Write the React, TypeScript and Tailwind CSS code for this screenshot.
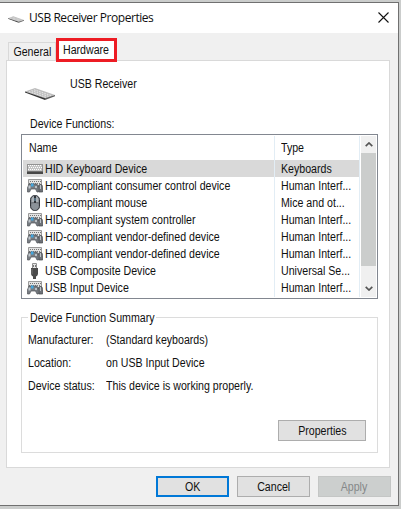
import { useState } from 'react';
import type { ReactNode } from 'react';
import clsx from 'clsx';

type IconKind = 'keyboard' | 'hid' | 'mouse' | 'usb';

interface DeviceFunction {
  name: string;
  type: string;
  icon: IconKind;
}

const devices: DeviceFunction[] = [
  { name: 'HID Keyboard Device', type: 'Keyboards', icon: 'keyboard' },
  { name: 'HID-compliant consumer control device', type: 'Human Interf...', icon: 'hid' },
  { name: 'HID-compliant mouse', type: 'Mice and ot...', icon: 'mouse' },
  { name: 'HID-compliant system controller', type: 'Human Interf...', icon: 'hid' },
  { name: 'HID-compliant vendor-defined device', type: 'Human Interf...', icon: 'hid' },
  { name: 'HID-compliant vendor-defined device', type: 'Human Interf...', icon: 'hid' },
  { name: 'USB Composite Device', type: 'Universal Se...', icon: 'usb' },
  { name: 'USB Input Device', type: 'Human Interf...', icon: 'hid' },
];

const summary = [
  { label: 'Manufacturer:', value: '(Standard keyboards)' },
  { label: 'Location:', value: 'on USB Input Device' },
  { label: 'Device status:', value: 'This device is working properly.' },
];

// Condensed dialog lettering
const Label = ({ children, className }: { children: ReactNode; className?: string }) => (
  <span className={clsx('inline-block whitespace-nowrap scale-x-[0.885]', className ?? 'origin-left')}>{children}</span>
);

const ReceiverIcon = ({ className }: { className?: string }) => (
  <svg viewBox="0 0 30 12" className={className}>
    <path d="M0 3.5 L10 0 L30 7 L20 10.5 Z" fill="#bdbdbd" />
    <path d="M0 3.5 L20 10.2 L20 12 L0 4.6 Z" fill="#333" />
    <path d="M20 10.2 L30 7 L30 8.3 L20 12 Z" fill="#5c5c5c" />
    <path d="M4 3.6 L21 9.3 M6.5 2.7 L23.5 8.4 M9 1.8 L26 7.5" stroke="#ececec" strokeWidth=".9" strokeDasharray="1.7 1" />
  </svg>
);

const DeviceIcon = ({ kind }: { kind: IconKind }) => {
  if (kind === 'keyboard') {
    return (
      <svg viewBox="0 0 16 16" className="size-4" shapeRendering="crispEdges">
        <path d="M0 3h16v8H0z" fill="#929292" />
        <path d="M1 4h14v6H1z" fill="#c4c4c4" />
        <path d="M1 4.5h14M2 6.5h13M1 8.5h14" stroke="#fff" strokeDasharray="1 1" />
        <path d="M0 10h16v3H0z" fill="#474747" />
        <path d="M0 10.5h16" stroke="#707070" />
      </svg>
    );
  }
  if (kind === 'mouse') {
    return (
      <svg viewBox="0 0 16 16" className="size-4">
        <rect x="3.5" y=".5" width="9" height="15" rx="4.2" fill="#72777d" stroke="#30343a" />
        <path d="M4.5 7V4Q5 1.5 7 1v6zM9 1q2 .5 2.5 3v3H9z" fill="#a9b0b6" />
        <path d="M4.5 9Q8 7 11.5 9v3Q10.5 15 8 15T4.5 12z" fill="#8b9299" />
        <rect x="7" y="1" width="2" height="7" fill="#30343a" />
        <path d="M8 3v3" stroke="#7da9c4" />
      </svg>
    );
  }
  if (kind === 'usb') {
    return (
      <svg viewBox="0 0 16 16" className="size-4">
        <path d="M5.5.5h4v5h-4z" fill="#e6e6e6" stroke="#909090" />
        <path d="M6.5 2v2M8.5 2v2" stroke="#777" />
        <path d="M4 5h7v6q-.5 2-2 2.5V16H6v-2.500q-1.500-.5-2-2.500z" fill="#4b4b4b" />
        <path d="M5 6v5" stroke="#777" />
      </svg>
    );
  }
  return (
    <svg viewBox="0 0 16 16" className="size-4">
      <path d="M1.500 1.500h13v7h-13z" fill="#e2e2e2" stroke="#999" />
      <path d="M3 3.500h11M2 5.500h12" stroke="#777" strokeDasharray="1 1" />
      <path d="M2 6h8l1 3 .5 5H10L8.500 11H4L2.500 14H.5L.4 10z" fill="#777c82" stroke="#50545a" strokeWidth=".7" />
      <path d="M1.500 7.500h2v3h-2z" fill="#c3c9ce" />
      <path d="M4 5.500h2.500v3H4z" fill="#43a6de" />
      <path d="M8 8h2v2H8z" fill="#b9bfc4" />
      <path d="M11.500 7.500Q13 5.500 15 7l.6 2.500V14h-3.600z" fill="#6d7177" stroke="#44484c" strokeWidth=".7" />
      <path d="M13.500 7v4" stroke="#bbc2c8" />
    </svg>
  );
};

interface DialogButtonProps {
  children: string;
  className?: string;
  disabled?: boolean;
}

const DialogButton = ({ children, className, disabled }: DialogButtonProps) => (
  <button
    disabled={disabled}
    className={clsx(
      'h-[21px] flex items-center justify-center pt-[2px]',
      disabled ? 'bg-[#cccfce] border border-[#c4c6c5] text-[#858889]' : 'bg-[#e1e1e1]',
      className,
    )}
  >
    <Label className="origin-center">{children}</Label>
  </button>
);

const App = () => {
  const [selected, setSelected] = useState(0);

  return (
    <div className="w-[401px] h-[509px] overflow-hidden bg-[#cbcdcc] pt-[2px] font-['Liberation_Sans',Arial,sans-serif] text-[12px] leading-[17px] text-[#101010]">
      <div className="w-[399px] h-[504px] bg-[#f0f0f0] border-t border-r border-b border-[#707070] flex flex-col">
        {/* Title bar */}
        <div className="h-[30px] shrink-0 bg-white flex items-center pl-2 pr-[9px]">
          <ReceiverIcon className="w-4 h-[7px] mt-[3px]" />
          <h1 className="ml-[5px] mb-[2px] font-['Open_Sans','Noto_Sans',sans-serif] text-[12px] tracking-[-0.45px] whitespace-nowrap">USB Receiver Properties</h1>
          <button aria-label="Close" className="ml-auto mb-[2px]">
            <svg viewBox="0 0 11 11" className="size-[11px]">
              <path d="M.5.5l10 10M10.500.5l-10 10" stroke="#111" strokeWidth="1.1" fill="none" />
            </svg>
          </button>
        </div>

        {/* Tabs */}
        <div className="h-[27px] shrink-0 flex items-end pl-2">
          <button className="w-12 h-[18px] border border-b-0 border-[#d9d9d9] flex items-center justify-center pt-[2px]">
            <Label className="origin-center">General</Label>
          </button>
          <button className="relative z-10 w-[61px] h-6 -mb-[2px] bg-white border-[3px] border-[#ed1c24] flex items-center justify-center pt-px pr-px">
            <Label className="origin-center">Hardware</Label>
          </button>
        </div>

        {/* Tab page */}
        <div className="w-[384px] h-[408px] shrink-0 ml-[6px] border border-[#d9d9d9] bg-white pl-[14px]">
          <div className="h-[54px] flex pt-[15px] pl-1">
            <ReceiverIcon className="w-[30px] h-3 mt-[12px]" />
            <Label className="ml-[15px] origin-left">USB Receiver</Label>
          </div>
          <div className="h-[19px] pt-px pl-[9px]"><Label>Device Functions:</Label></div>

          <div className="w-[357px] h-[165px] border border-[#828790] p-px flex">
            <div className="w-[337px] relative flex flex-col">
              <div className="h-6 flex items-center">
                <div className="w-[251px] pl-[6px]"><Label>Name</Label></div>
                <div className="pl-[7px]"><Label>Type</Label></div>
              </div>
              {devices.map((device, index) => (
                <div
                  key={index}
                  onClick={() => setSelected(index)}
                  className={clsx('h-[17px] flex items-center', selected === index && 'bg-[#d9d9d9]')}
                >
                  <div className="w-[251px] h-[17px] flex items-center pl-1">
                    <DeviceIcon kind={device.icon} />
                    <Label className="ml-[2px] pt-[2px] origin-left">{device.name}</Label>
                  </div>
                  <Label className="ml-[7px] pt-[2px] origin-left">{device.type}</Label>
                </div>
              ))}
              <div className="absolute inset-y-0 left-[251px] right-0 border-x border-[#e2edf5]" />
            </div>
            <div className="ml-px w-[15px] h-[161px] bg-[#f0f0f0] flex flex-col items-center">
              <div className="h-[17px] flex items-center">
                <svg viewBox="0 0 8 5" className="w-2 h-[5px]"><path d="M.7 4.200L4 1l3.300 3.200" fill="none" stroke="#555" strokeWidth="1.7" /></svg>
              </div>
              <div className="w-[15px] h-[113px] bg-[#cbcdcc]" />
              <div className="mt-auto h-[17px] flex items-center">
                <svg viewBox="0 0 8 5" className="w-2 h-[5px]"><path d="M.7.8L4 4l3.300-3.200" fill="none" stroke="#555" strokeWidth="1.7" /></svg>
              </div>
            </div>
          </div>

          {/* Function summary */}
          <div className="w-[357px] h-[136px] mt-[18px] border border-[#dcdcdc] flex flex-col">
            <div className="h-[17px] -mt-[8px] ml-[6px] w-[128px] pl-[2px] bg-white shrink-0"><Label>Device Function Summary</Label></div>
            <div className="pt-[2px] pl-[6px]">
              {summary.map(item => (
                <div key={item.label} className="h-[23px] flex items-center">
                  <div className="w-[78px]"><Label>{item.label}</Label></div>
                  <Label>{item.value}</Label>
                </div>
              ))}
            </div>
            <DialogButton className="w-[88px] ml-auto mr-[11px] mt-auto mb-[11px] border border-[#adadad]">Properties</DialogButton>
          </div>
        </div>

        <div className="flex justify-end gap-2 pt-2 pr-[7px]">
          <DialogButton className="w-[73px] border-2 border-[#0078d7]">OK</DialogButton>
          <DialogButton className="w-[73px] border border-[#adadad]">Cancel</DialogButton>
          <DialogButton className="w-[73px]" disabled>Apply</DialogButton>
        </div>
      </div>
    </div>
  );
};

export default App;
